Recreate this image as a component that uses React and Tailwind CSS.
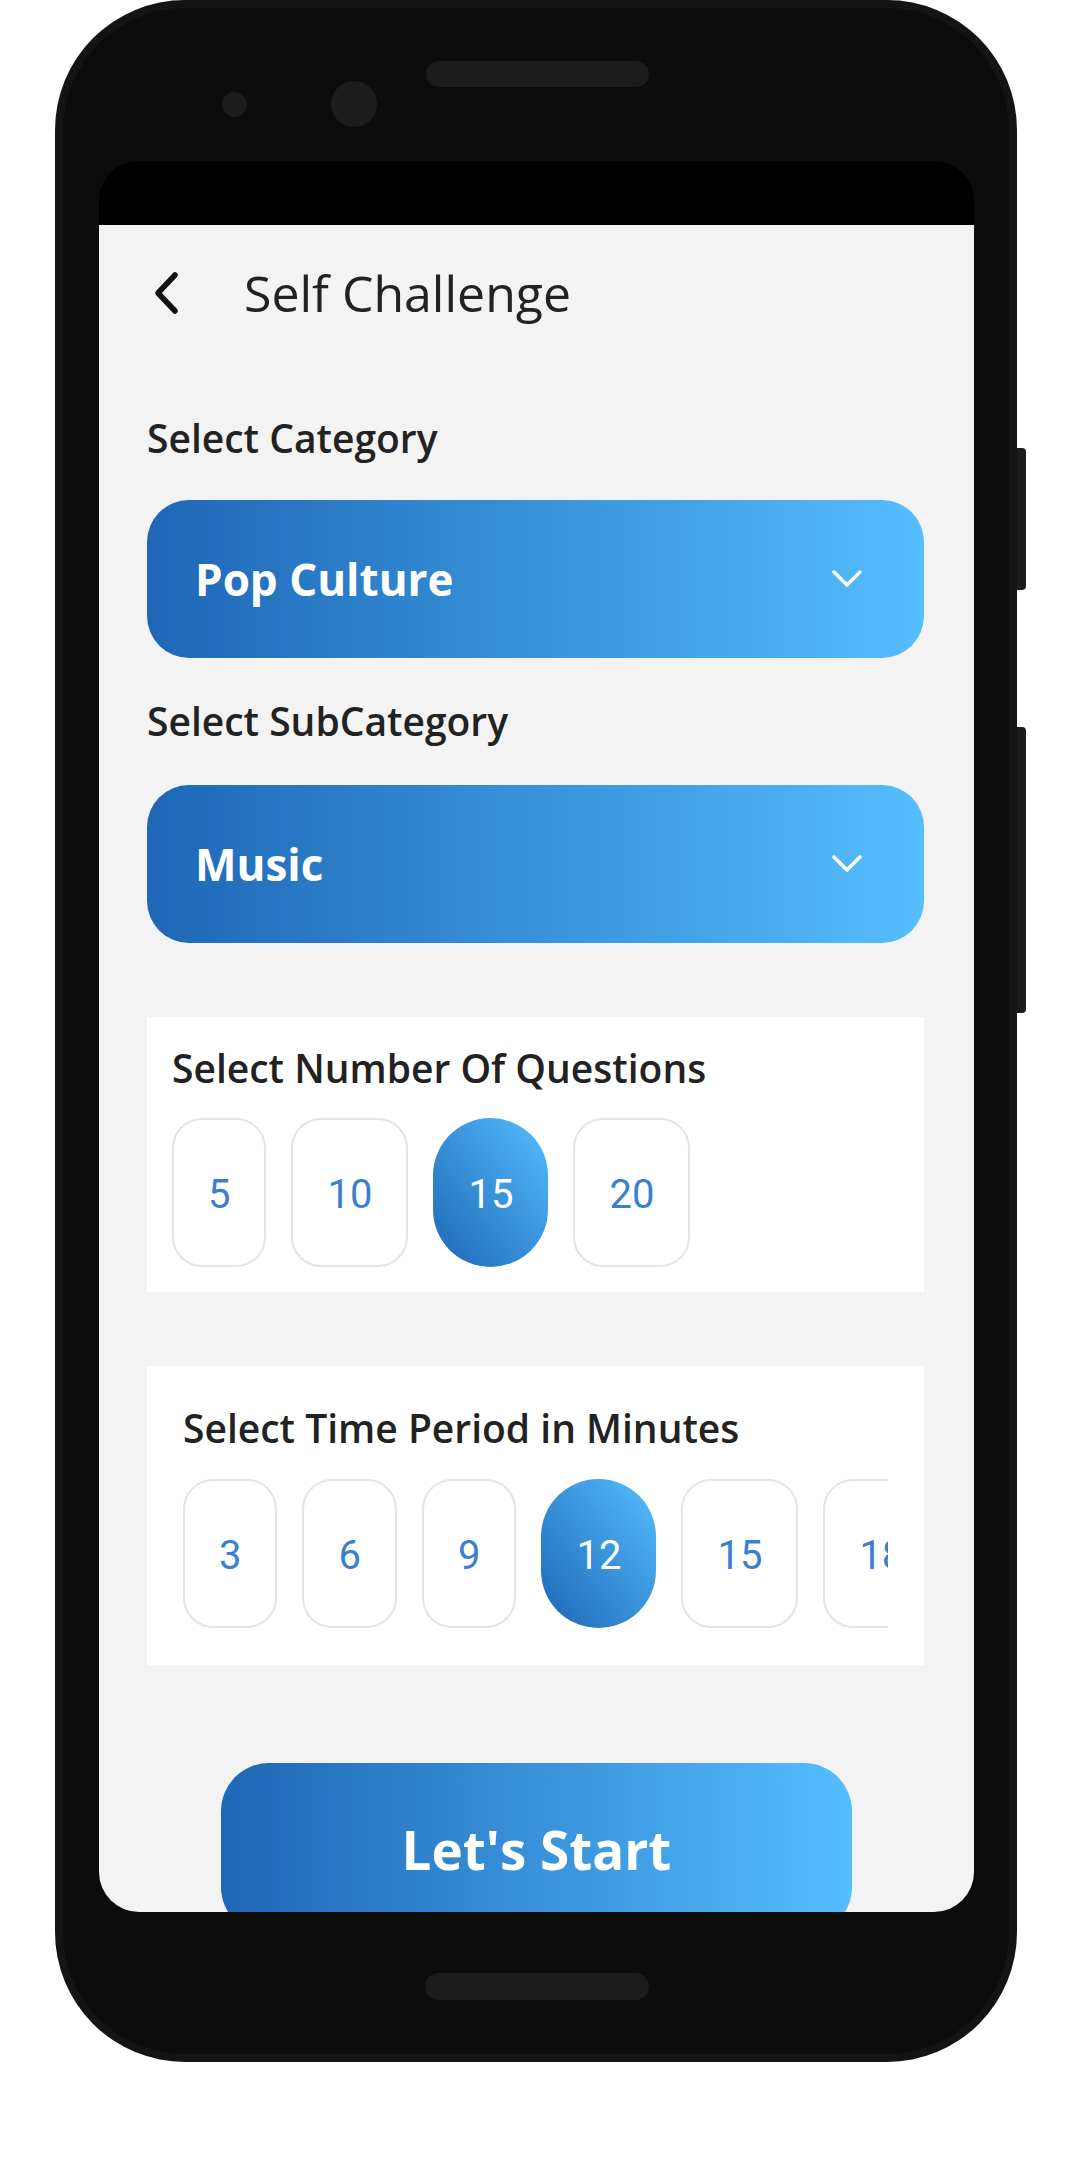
import React, { useState } from "react";

function Chevron({ className }) {
  return (
    <svg className={className} width="34" height="20" viewBox="0 0 34 20" fill="none">
      <path d="M4 3 L17 16 L30 3" stroke="#ffffff" strokeWidth="3.5" strokeLinecap="round" strokeLinejoin="round" />
    </svg>
  );
}

function Dropdown({ label }) {
  return (
    <div className="h-[158px] w-[777px] rounded-[42px] bg-linear-to-r from-[#1f67b6] to-[#55befe] flex items-center justify-between pl-[48px] pr-[60px]">
      <span className="text-[44px] leading-none font-bold text-white">{label}</span>
      <Chevron />
    </div>
  );
}

function Chip({ value, selected, onClick }) {
  return (
    <button
      onClick={onClick}
      className={`shrink-0 h-[149px] flex items-center justify-center pt-[4px] font-['Roboto',sans-serif] text-[40px] leading-none ${
        selected
          ? 'px-[35px] rounded-[58px] bg-linear-to-tr from-[#1f67b6] to-[#55befe] text-white'
          : 'px-[34px] rounded-[30px] bg-white border-2 border-[#e4e4e4] text-[#3c7fd0]'
      }`}
    >
      {value}
    </button>
  );
}

export default function App() {
  const [questions, setQuestions] = useState(15);
  const [minutes, setMinutes] = useState(12);

  return (
    <div className="min-h-screen w-[1080px] h-[2160px] bg-white pl-[55px] font-['Open_Sans',sans-serif]">
      <div className="relative w-[962px] h-[2062px] rounded-[130px] bg-[#141414] p-[8px]">
        {/* hardware */}
        <div className="absolute left-[371px] top-[61px] w-[223px] h-[26px] rounded-full bg-[#1c1c1c]" />
        <div className="absolute left-[167px] top-[92px] w-[25px] h-[25px] rounded-full bg-[#1c1c1c]" />
        <div className="absolute left-[276px] top-[81px] w-[46px] h-[46px] rounded-full bg-[#1c1c1c]" />
        <div className="absolute left-[370px] top-[1973px] w-[224px] h-[27px] rounded-full bg-[#1c1c1c]" />
        <div className="absolute left-[962px] top-[448px] w-[9px] h-[142px] rounded-r-[4px] bg-[#1c1c1c]" />
        <div className="absolute left-[962px] top-[727px] w-[9px] h-[286px] rounded-r-[4px] bg-[#1c1c1c]" />

        <div className="h-full rounded-[122px] bg-[#0c0c0c] pt-[153px] pl-[36px]">
          {/* screen */}
          <div className="w-[875px] h-[1751px] rounded-[40px] overflow-hidden bg-black flex flex-col">
            <div className="h-[64px] shrink-0 bg-black" />
            <div className="flex-1 overflow-hidden bg-[#f3f3f3] pt-[43px]">
              <div className="h-[50px] flex items-center pl-[52px]">
                <svg width="30" height="44" viewBox="0 0 30 44" fill="none">
                  <path d="M24 4 L7 22 L24 40" stroke="#111111" strokeWidth="5.5" strokeLinecap="round" strokeLinejoin="round" />
                </svg>
                <h1 className="ml-[63px] text-[50px] leading-none font-medium text-[#222222]">Self Challenge</h1>
              </div>

              <div className="pl-[48px] pr-[50px]">
                <p className="mt-[100px] text-[39px] leading-none font-semibold text-[#222222]">Select Category</p>
                <div className="mt-[43px]">
                  <Dropdown label="Pop Culture" />
                </div>

                <p className="mt-[43px] text-[39px] leading-none font-semibold text-[#222222]">Select SubCategory</p>
                <div className="mt-[45px]">
                  <Dropdown label="Music" />
                </div>

                {/* Number of questions */}
                <div className="mt-[74px] w-[777px] bg-white pt-[31px] pl-[25px] pb-[25px]">
                  <p className="text-[39px] leading-none font-semibold text-[#222222]">Select Number Of Questions</p>
                  <div className="mt-[31px] flex gap-[25px]">
                    {[5, 10, 15, 20].map((n) => (
                      <Chip key={n} value={n} selected={questions === n} onClick={() => setQuestions(n)} />
                    ))}
                  </div>
                </div>

                {/* Time period */}
                <div className="mt-[74px] w-[777px] bg-white pt-[42px] px-[36px] pb-[37px]">
                  <p className="text-[39px] leading-none font-semibold text-[#222222]">Select Time Period in Minutes</p>
                  <div className="mt-[32px] flex gap-[25px] overflow-hidden">
                    {[3, 6, 9, 12, 15, 18, 21, 24].map((n) => (
                      <Chip key={n} value={n} selected={minutes === n} onClick={() => setMinutes(n)} />
                    ))}
                  </div>
                </div>
              </div>

              <button className="mt-[98px] mx-auto flex items-center justify-center w-[631px] h-[172px] rounded-[48px] bg-linear-to-r from-[#1f67b6] to-[#55befe]">
                <span className="text-[53px] leading-none font-bold text-white">Let's Start</span>
              </button>
            </div>
          </div>
        </div>
      </div>
    </div>
  );
}
